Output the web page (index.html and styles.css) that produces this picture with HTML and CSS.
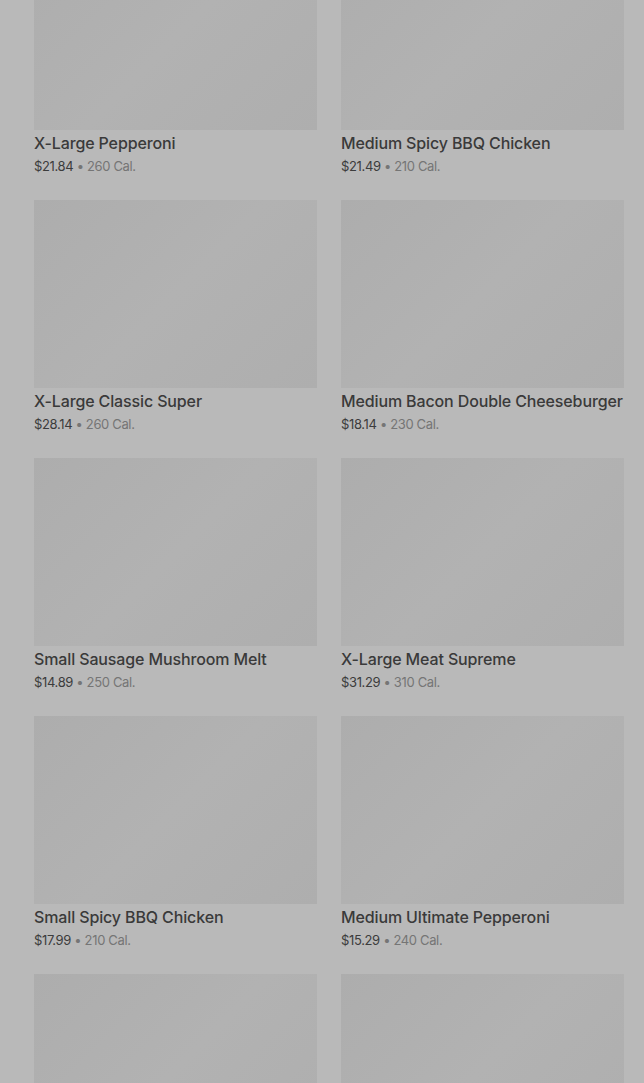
FILE: index.html
```html
<!DOCTYPE html>
<html>
	<head>
		<meta charset="UTF-8">
		<title>Menu</title>
		<link rel="stylesheet" href="styles.css">
	</head>
	<body>
		<div class="menuList">
			<div class="item">
				<div class="thumb"></div>
				<div class="name">X-Large Pepperoni</div>
				<div class="meta"><span class="price">$21.84</span> • 260 Cal.</div>
			</div>
			<div class="item">
				<div class="thumb"></div>
				<div class="name">Medium Spicy BBQ Chicken</div>
				<div class="meta"><span class="price">$21.49</span> • 210 Cal.</div>
			</div>
			<div class="item">
				<div class="thumb"></div>
				<div class="name">X-Large Classic Super</div>
				<div class="meta"><span class="price">$28.14</span> • 260 Cal.</div>
			</div>
			<div class="item">
				<div class="thumb"></div>
				<div class="name">Medium Bacon Double Cheeseburger</div>
				<div class="meta"><span class="price">$18.14</span> • 230 Cal.</div>
			</div>
			<div class="item">
				<div class="thumb"></div>
				<div class="name">Small Sausage Mushroom Melt</div>
				<div class="meta"><span class="price">$14.89</span> • 250 Cal.</div>
			</div>
			<div class="item">
				<div class="thumb"></div>
				<div class="name">X-Large Meat Supreme</div>
				<div class="meta"><span class="price">$31.29</span> • 310 Cal.</div>
			</div>
			<div class="item">
				<div class="thumb"></div>
				<div class="name">Small Spicy BBQ Chicken</div>
				<div class="meta"><span class="price">$17.99</span> • 210 Cal.</div>
			</div>
			<div class="item">
				<div class="thumb"></div>
				<div class="name">Medium Ultimate Pepperoni</div>
				<div class="meta"><span class="price">$15.29</span> • 240 Cal.</div>
			</div>
			<div class="item">
				<div class="thumb"></div>
			</div>
			<div class="item">
				<div class="thumb"></div>
			</div>
		</div>
	</body>
</html>
```

FILE: styles.css
```css
*,
*::before,
*::after{
	box-sizing: border-box;
}
html,body{
	margin: 0;
	height: 100%;
	overflow: hidden;
	background: #b9b9b9;
}
body{
	font-family: "Inter", "Liberation Sans", sans-serif;
}
.menuList{
	display: grid;
	grid-template-columns: 283px 283px;
	column-gap: 24px;
	padding-left: 34px;
	margin-top: -58px;
}
.menuList .item{
	height: 258px;
}
.menuList .thumb{
	height: 188px;
	background: linear-gradient(135deg, #adadad 0%, #b2b2b2 50%, #aeaeae 100%);
}
.menuList .name{
	margin-top: 4px;
	font-size: 16px;
	font-weight: 500;
	line-height: 18px;
	letter-spacing: -0.13px;
	color: #3a3a3a;
	white-space: nowrap;
}
.menuList .meta{
	margin-top: 5px;
	font-size: 13px;
	line-height: 18px;
	letter-spacing: -0.35px;
	color: #757575;
}
.menuList .meta .price{
	color: #3c3c3c;
}
```
